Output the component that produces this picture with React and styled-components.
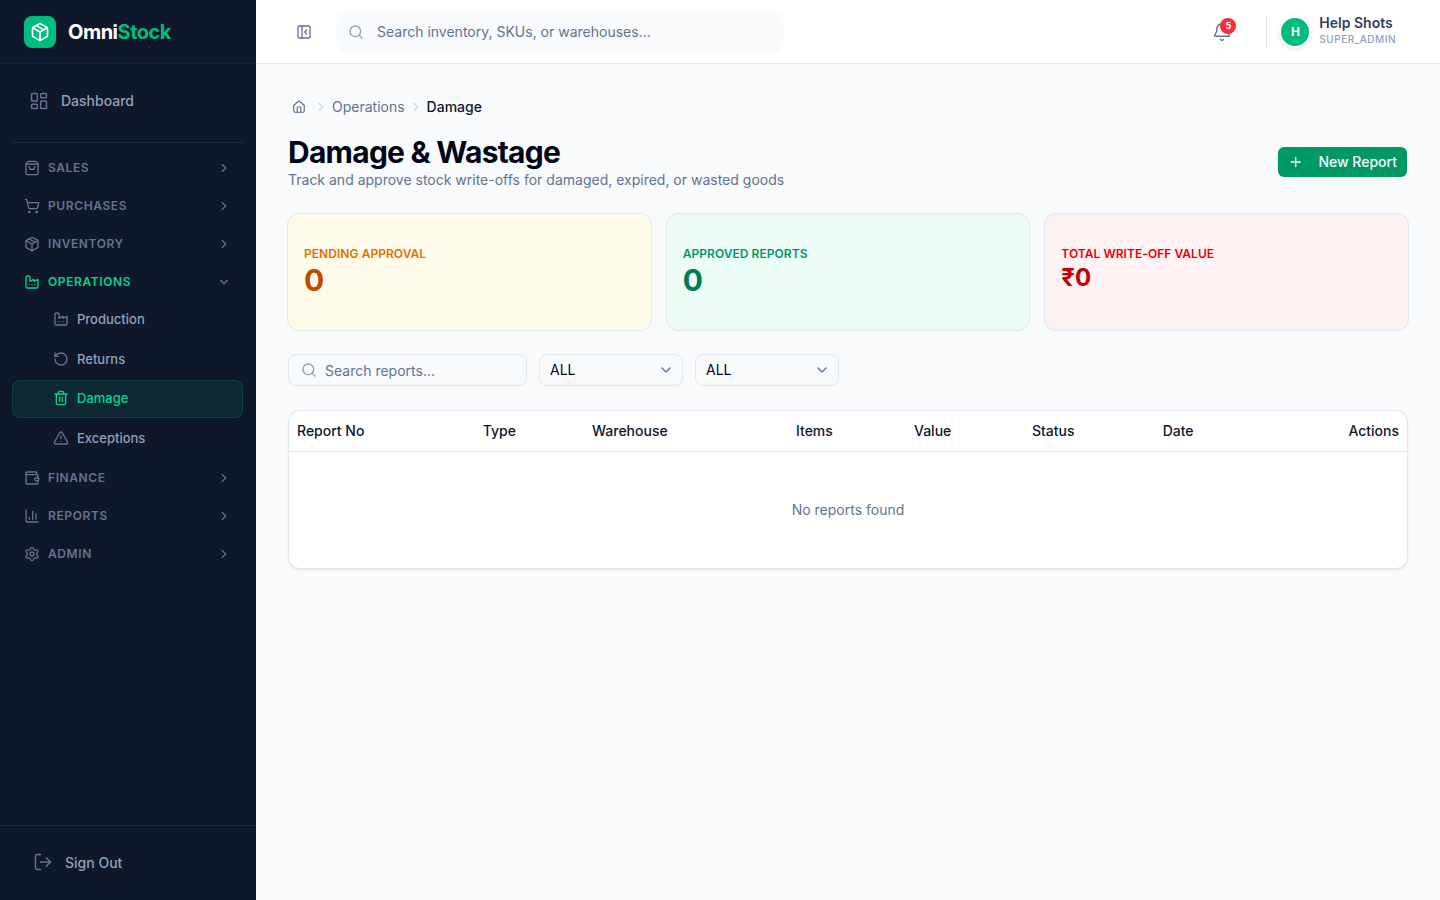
import React from "react";
import styled, { createGlobalStyle } from "styled-components";
import {
  AlertTriangle,
  Bell,
  ChartColumn,
  ChevronDown,
  ChevronRight,
  Factory,
  House,
  LayoutDashboard,
  LogOut,
  Package,
  PanelLeftClose,
  Plus,
  RotateCcw,
  Search,
  Settings,
  ShoppingBag,
  ShoppingCart,
  Trash2,
  Wallet,
} from "lucide-react";

const GlobalStyle = createGlobalStyle`
  * { box-sizing: border-box; }
  html, body { margin: 0; padding: 0; height: 100%; }
  body {
    font-family: Inter, "Liberation Sans", sans-serif;
    background: #f8fafc;
    color: #020618;
  }
`;

const columns = [
  { label: "Report No", width: 185.7 },
  { label: "Type", width: 109.3 },
  { label: "Warehouse", width: 204 },
  { label: "Items", width: 118 },
  { label: "Value", width: 118 },
  { label: "Status", width: 130.7 },
  { label: "Date", width: 100.3 },
  { label: "Actions", width: 152, right: true },
];

function Section({ icon: Icon, label, active, children }) {
  return (
    <>
      <SectionRow $active={active}>
        <Icon size={16} strokeWidth={2} />
        <SectionLabel>{label}</SectionLabel>
        <SectionChevron>
          {active ? <ChevronDown size={14} /> : <ChevronRight size={14} />}
        </SectionChevron>
      </SectionRow>
      {children}
    </>
  );
}

export default function App() {
  return (
    <Layout>
      <GlobalStyle />
      <Sidebar>
        <Brand>
          <BrandMark>
            <Package size={20} strokeWidth={2} />
          </BrandMark>
          <BrandName>
            Omni<span>Stock</span>
          </BrandName>
        </Brand>

        <DashboardBlock>
          <DashboardLink>
            <LayoutDashboard size={20} strokeWidth={1.75} />
            Dashboard
          </DashboardLink>
        </DashboardBlock>

        <Nav>
          <Section icon={ShoppingBag} label="SALES" />
          <Section icon={ShoppingCart} label="PURCHASES" />
          <Section icon={Package} label="INVENTORY" />
          <Section icon={Factory} label="OPERATIONS" active>
            <SubItem>
              <Factory size={16} />
              Production
            </SubItem>
            <SubItem>
              <RotateCcw size={16} />
              Returns
            </SubItem>
            <SubItem $active>
              <Trash2 size={16} />
              Damage
            </SubItem>
            <SubItem>
              <AlertTriangle size={16} />
              Exceptions
            </SubItem>
          </Section>
          <Section icon={Wallet} label="FINANCE" />
          <Section icon={ChartColumn} label="REPORTS" />
          <Section icon={Settings} label="ADMIN" />
        </Nav>

        <SidebarFooter>
          <SignOut>
            <LogOut size={20} strokeWidth={1.75} />
            Sign Out
          </SignOut>
        </SidebarFooter>
      </Sidebar>

      <Main>
        <Topbar>
          <CollapseButton>
            <PanelLeftClose size={16} />
          </CollapseButton>
          <GlobalSearch>
            <Search size={16} />
            <span>Search inventory, SKUs, or warehouses...</span>
          </GlobalSearch>
          <TopbarRight>
            <BellWrap>
              <Bell size={20} strokeWidth={1.75} />
              <BellBadge>5</BellBadge>
            </BellWrap>
            <TopDivider />
            <Avatar>H</Avatar>
            <UserInfo>
              <UserName>Help Shots</UserName>
              <UserRole>SUPER_ADMIN</UserRole>
            </UserInfo>
          </TopbarRight>
        </Topbar>

        <Content>
          <Breadcrumb>
            <House size={14} />
            <CrumbSep $left={8}>
              <ChevronRight size={14} />
            </CrumbSep>
            <span>Operations</span>
            <CrumbSep $left={4}>
              <ChevronRight size={14} />
            </CrumbSep>
            <CrumbCurrent>Damage</CrumbCurrent>
          </Breadcrumb>

          <PageHeader>
            <div>
              <PageTitle>Damage &amp; Wastage</PageTitle>
              <PageSubtitle>
                Track and approve stock write-offs for damaged, expired, or
                wasted goods
              </PageSubtitle>
            </div>
            <NewButton>
              <Plus size={16} />
              New Report
            </NewButton>
          </PageHeader>

          <StatGrid>
            <StatCard $bg="#fffbeb">
              <StatLabel $color="#e17100">PENDING APPROVAL</StatLabel>
              <StatValue $color="#bb4d00">0</StatValue>
            </StatCard>
            <StatCard $bg="#ecfdf5">
              <StatLabel $color="#009966">APPROVED REPORTS</StatLabel>
              <StatValue $color="#007a55">0</StatValue>
            </StatCard>
            <StatCard $bg="#fef2f2">
              <StatLabel $color="#e7000b">TOTAL WRITE-OFF VALUE</StatLabel>
              <StatValue $color="#c10007" $small>
                ₹0
              </StatValue>
            </StatCard>
          </StatGrid>

          <Filters>
            <FilterSearch>
              <Search size={16} />
              <span>Search reports...</span>
            </FilterSearch>
            <FilterSelect>
              ALL
              <ChevronDown size={16} />
            </FilterSelect>
            <FilterSelect>
              ALL
              <ChevronDown size={16} />
            </FilterSelect>
          </Filters>

          <TableCard>
            <Table>
              <thead>
                <tr>
                  {columns.map((col) => (
                    <HeadCell
                      key={col.label}
                      $width={col.width}
                      $right={col.right}
                    >
                      {col.label}
                    </HeadCell>
                  ))}
                </tr>
              </thead>
              <tbody>
                <tr>
                  <EmptyCell colSpan={columns.length}>
                    No reports found
                  </EmptyCell>
                </tr>
              </tbody>
            </Table>
          </TableCard>
        </Content>
      </Main>
    </Layout>
  );
}

const Layout = styled.div`
  display: flex;
  height: 100vh;
  overflow: hidden;
`;

const Sidebar = styled.aside`
  width: 256px;
  flex-shrink: 0;
  display: flex;
  flex-direction: column;
  background: #0f172b;
`;

const Brand = styled.div`
  height: 64px;
  flex-shrink: 0;
  display: flex;
  align-items: center;
  gap: 12px;
  padding-left: 24px;
  border-bottom: 1px solid rgba(29, 41, 61, 0.5);
`;

const BrandMark = styled.div`
  width: 32px;
  height: 32px;
  border-radius: 8px;
  display: flex;
  align-items: center;
  justify-content: center;
  background: #00bc7d;
  color: #ffffff;
`;

const BrandName = styled.div`
  font-size: 20px;
  font-weight: 700;
  letter-spacing: -0.5px;
  color: #ffffff;

  span {
    color: #00bc7d;
  }
`;

const DashboardBlock = styled.div`
  margin: 0 12px;
  height: 79px;
  display: flex;
  align-items: center;
  padding-bottom: 5px;
  border-bottom: 1px solid #1d293d;
`;

const DashboardLink = styled.div`
  display: flex;
  align-items: center;
  gap: 12px;
  padding-left: 17px;
  font-size: 14px;
  font-weight: 500;
  color: #90a1b9;

  svg {
    color: #62748e;
  }
`;

const Nav = styled.nav`
  flex: 1;
  display: flex;
  flex-direction: column;
  padding: 5px 13px 0 12px;
`;

const SectionRow = styled.div`
  height: 38px;
  flex-shrink: 0;
  display: flex;
  align-items: center;
  gap: 8px;
  padding: 0 12px;
  color: ${(p) => (p.$active ? "#00d492" : "#62748e")};

  svg {
    margin-top: 2px;
  }
`;

const SectionLabel = styled.span`
  flex: 1;
  font-size: 12px;
  font-weight: 600;
  letter-spacing: 0.6px;
`;

const SectionChevron = styled.span`
  display: flex;
  color: #62748e;
`;

const SubItem = styled.div`
  height: 38px;
  margin-top: ${(p) => (p.$active ? "1px" : "0")};
  margin-bottom: ${(p) => (p.$active ? "0.5px" : "1.5px")};
  flex-shrink: 0;
  display: flex;
  align-items: center;
  gap: 8px;
  padding-left: 40px;
  padding-bottom: ${(p) => (p.$active ? "2px" : "0")};
  font-size: 13px;
  font-weight: 500;
  border-radius: 8px;
  border: 1px solid ${(p) => (p.$active ? "rgba(0, 188, 125, 0.2)" : "transparent")};
  background: ${(p) => (p.$active ? "rgba(0, 188, 125, 0.1)" : "transparent")};
  color: ${(p) => (p.$active ? "#00d492" : "#90a1b9")};

  svg {
    color: ${(p) => (p.$active ? "#00d492" : "#62748e")};
  }
`;

const SidebarFooter = styled.div`
  height: 75px;
  flex-shrink: 0;
  display: flex;
  align-items: center;
  padding: 0 0 2px 33px;
  border-top: 1px solid #1d293d;
`;

const SignOut = styled.div`
  display: flex;
  align-items: center;
  gap: 12px;
  font-size: 14px;
  font-weight: 500;
  color: #90a1b9;

  svg {
    color: #62748e;
  }
`;

const Main = styled.main`
  flex: 1;
  min-width: 0;
  display: flex;
  flex-direction: column;
`;

const Topbar = styled.header`
  height: 64px;
  flex-shrink: 0;
  display: flex;
  align-items: center;
  padding: 0 32px;
  background: #ffffff;
  border-bottom: 1px solid #e2e8f0;
`;

const CollapseButton = styled.div`
  width: 16px;
  display: flex;
  margin-left: 8px;
  color: #62748e;
`;

const GlobalSearch = styled.div`
  width: 448px;
  height: 40px;
  margin-left: 24px;
  display: flex;
  align-items: center;
  gap: 13px;
  padding-left: 12px;
  border-radius: 12px;
  background: #f8fafc;
  font-size: 14px;
  color: #62748e;

  svg {
    color: #90a1b9;
  }
`;

const TopbarRight = styled.div`
  margin-left: auto;
  display: flex;
  align-items: center;
  margin-right: 12px;
`;

const BellWrap = styled.div`
  position: relative;
  display: flex;
  color: #62748e;
`;

const BellBadge = styled.span`
  position: absolute;
  top: -4px;
  right: -4px;
  width: 16px;
  height: 16px;
  border-radius: 50%;
  display: flex;
  align-items: center;
  justify-content: center;
  background: #fb2c36;
  color: #ffffff;
  font-size: 9px;
  font-weight: 700;
`;

const TopDivider = styled.div`
  width: 1px;
  height: 32px;
  margin: 0 14px 0 34px;
  background: #e2e8f0;
`;

const Avatar = styled.div`
  width: 28px;
  height: 28px;
  border-radius: 50%;
  display: flex;
  align-items: center;
  justify-content: center;
  background: #00bc7d;
  color: #ffffff;
  font-size: 12px;
  font-weight: 700;
  box-shadow: 0 0 0 2px #ffffff, 0 1px 4px 2px rgba(15, 23, 43, 0.1);
`;

const UserInfo = styled.div`
  margin: 0 0 4px 10px;
`;

const UserName = styled.div`
  font-size: 14px;
  font-weight: 600;
  line-height: 18px;
  color: #314158;
`;

const UserRole = styled.div`
  font-size: 10px;
  line-height: 14px;
  font-weight: 500;
  letter-spacing: 0.5px;
  color: #90a1b9;
`;

const Content = styled.div`
  flex: 1;
  padding: 32px;
`;

const Breadcrumb = styled.div`
  height: 20px;
  display: flex;
  align-items: center;
  margin-left: 4px;
  font-size: 14px;
  color: #62748e;

  svg {
    display: block;
    margin-top: 2px;
  }
`;

const CrumbSep = styled.span`
  margin: 0 4px 0 ${(p) => p.$left}px;
  color: #cad5e2;
`;

const CrumbCurrent = styled.span`
  color: #0f172b;
  font-weight: 500;
`;

const PageHeader = styled.div`
  margin-top: 21px;
  display: flex;
  align-items: center;
  justify-content: space-between;
`;

const PageTitle = styled.h1`
  margin: 0;
  font-size: 30px;
  font-weight: 700;
  line-height: 30px;
  letter-spacing: -0.75px;
  color: #020618;
`;

const PageSubtitle = styled.p`
  margin: 3px 0 0;
  font-size: 14px;
  line-height: 20px;
  color: #62748e;
`;

const NewButton = styled.button`
  width: 129px;
  height: 30px;
  margin: 0 1px 3px 0;
  display: flex;
  align-items: center;
  gap: 15px;
  padding: 0 10px 1px;
  border: none;
  border-radius: 6px;
  background: #009966;
  color: #f8fafc;
  font-family: inherit;
  font-size: 14px;
  font-weight: 500;
  white-space: nowrap;
`;

const StatGrid = styled.div`
  margin: 23px -1px 0;
  display: grid;
  grid-template-columns: repeat(3, 1fr);
  gap: 14px;
`;

const StatCard = styled.div`
  height: 118px;
  padding: 32px 16px 0;
  border: 1px solid #e2e8f0;
  border-radius: 12px;
  background: ${(p) => p.$bg};
`;

const StatLabel = styled.div`
  font-size: 12px;
  font-weight: 600;
  line-height: 16px;
  letter-spacing: 0.05px;
  color: ${(p) => p.$color};
`;

const StatValue = styled.div`
  font-size: ${(p) => (p.$small ? "24px" : "30px")};
  font-weight: 700;
  line-height: ${(p) => (p.$small ? "32px" : "36px")};
  color: ${(p) => p.$color};
`;

const Filters = styled.div`
  margin-top: 23px;
  display: flex;
  gap: 12px;
`;

const FilterSearch = styled.div`
  width: 239px;
  height: 32px;
  display: flex;
  align-items: center;
  gap: 8px;
  padding-left: 12px;
  border: 1px solid #e2e8f0;
  border-radius: 8px;
  font-size: 14px;
  color: #62748e;

  svg {
    color: #90a1b9;
  }
`;

const FilterSelect = styled.div`
  width: 144px;
  height: 32px;
  display: flex;
  align-items: center;
  justify-content: space-between;
  padding: 0 8px 1px 10px;
  border: 1px solid #e2e8f0;
  border-radius: 8px;
  font-size: 14px;
  color: #020618;

  svg {
    color: #62748e;
  }
`;

const TableCard = styled.div`
  margin-top: 24px;
  border: 1px solid #e2e8f0;
  border-radius: 12px;
  background: #ffffff;
  box-shadow: 0 1px 2px rgba(15, 23, 43, 0.1);
  overflow: hidden;
`;

const Table = styled.table`
  width: 100%;
  table-layout: fixed;
  border-collapse: collapse;
`;

const HeadCell = styled.th`
  width: ${(p) => p.$width}px;
  height: 40px;
  padding: 0 8px;
  border-bottom: 1px solid #e2e8f0;
  text-align: ${(p) => (p.$right ? "right" : "left")};
  font-size: 14px;
  font-weight: 500;
  color: #0f172b;
`;

const EmptyCell = styled.td`
  height: 117px;
  text-align: center;
  font-size: 14px;
  color: #62748e;
`;
